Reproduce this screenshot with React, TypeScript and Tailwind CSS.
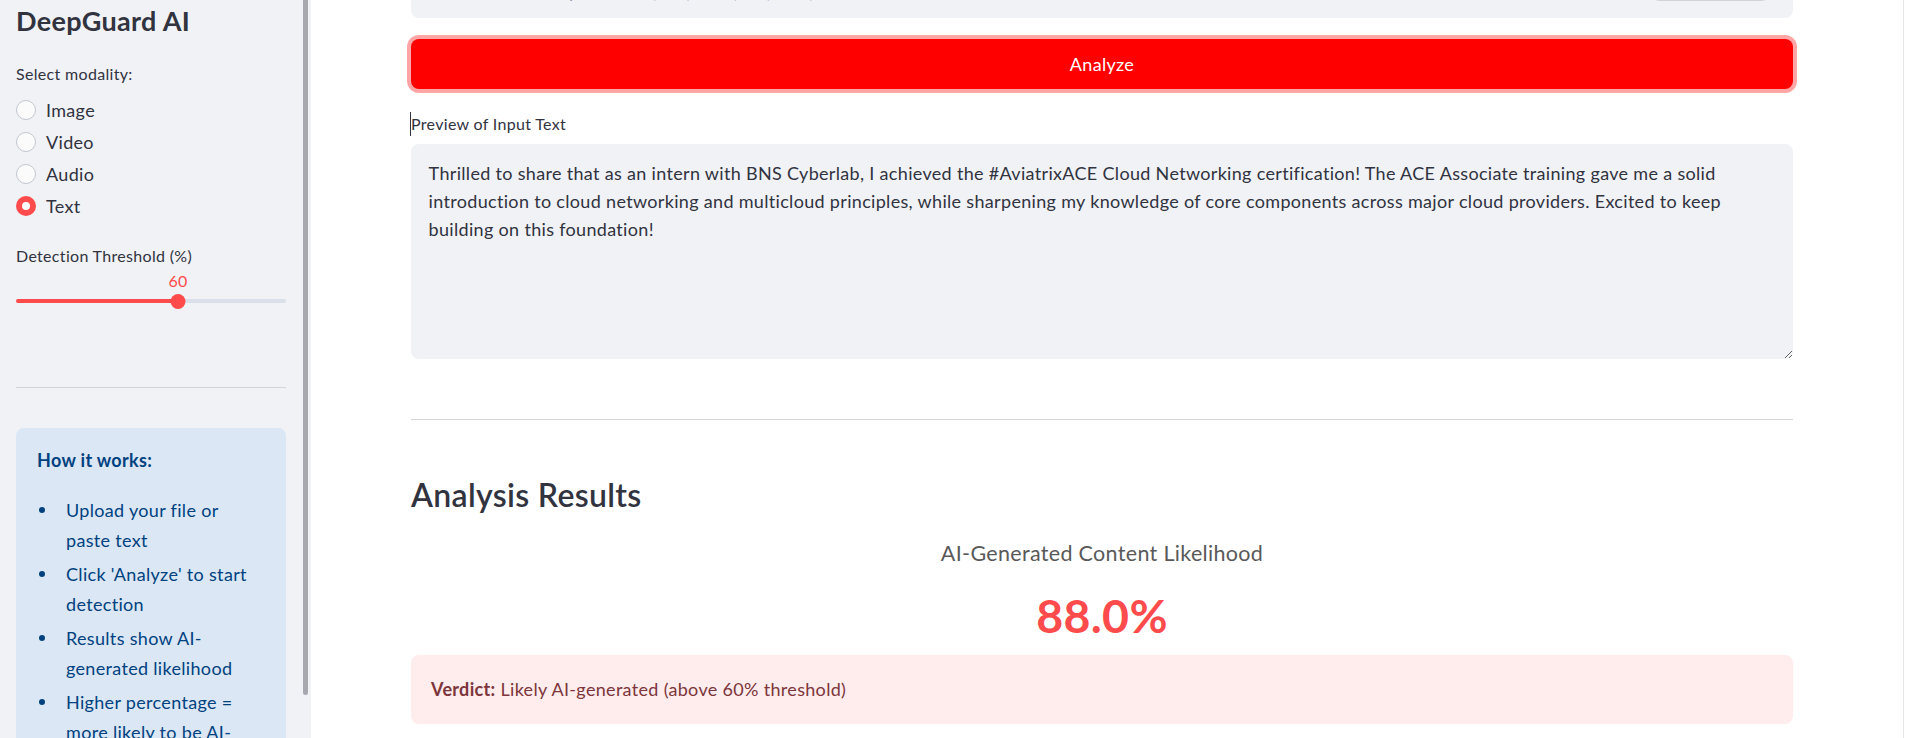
import React from 'react';

const INPUT_TEXT =
  "Thrilled to share that as an intern with BNS Cyberlab, I achieved the #AviatrixACE Cloud Networking certification! The ACE Associate training gave me a solid introduction to cloud networking and multicloud principles, while sharpening my knowledge of core components across major cloud providers. Excited to keep building on this foundation!";

const MODALITIES = ['Image', 'Video', 'Audio', 'Text'];

const STEPS = [
  'Upload your file or paste text',
  "Click 'Analyze' to start detection",
  'Results show AI-generated likelihood',
  'Higher percentage = more likely to be AI-generated',
];

function Radio({ label, checked }: { label: string; checked?: boolean }) {
  return (
    <label className="flex h-[32px] items-center gap-[10px]">
      {checked ? (
        <span className="flex h-[20px] w-[20px] items-center justify-center rounded-full bg-[#ff4b4b]">
          <span className="h-[8px] w-[8px] rounded-full bg-white" />
        </span>
      ) : (
        <span className="h-[20px] w-[20px] rounded-full border border-[#c3c6cf] bg-[#fbfbfc]" />
      )}
      <span className="text-[18px] leading-[28px]">{label}</span>
    </label>
  );
}

function Sidebar() {
  const threshold = 60;
  return (
    <aside className="relative h-full w-[311px] shrink-0 bg-[#f0f2f6]">
      <div className="pl-[16px] pr-[25px] pt-[3px]">
        <h2 className="text-[27px] font-bold leading-[36px] text-[#31333f]">DeepGuard AI</h2>

        <p className="mt-[23px] text-[16px] leading-[24px]">Select modality:</p>
        <div className="mt-[8px] flex flex-col">
          {MODALITIES.map((m) => (
            <Radio key={m} label={m} checked={m === 'Text'} />
          ))}
        </div>

        <p className="mt-[22px] text-[16px] leading-[24px]">Detection Threshold (%)</p>
        <div className="relative h-[50px]">
          <span
            className="absolute top-[3px] -translate-x-1/2 text-[16px] leading-[20px] text-[#ff4b4b]"
            style={{ left: `${threshold * 2.7}px` }}
          >
            {threshold}
          </span>
          <div className="absolute left-0 right-0 top-[31px] h-[4px] rounded-full bg-[#dadfe9]">
            <div className="h-full rounded-full bg-[#ff4b4b]" style={{ width: `${threshold}%` }} />
          </div>
          <span
            className="absolute top-[26px] h-[15px] w-[15px] -translate-x-1/2 rounded-full bg-[#ff4b4b]"
            style={{ left: `${threshold * 2.7}px` }}
          />
        </div>

        <div className="mt-[69px] h-px bg-[#d3d4d8]" />

        <div className="mt-[40px] rounded-lg bg-[#dbe7f4] pb-[20px] pl-[21px] pr-[28px] pt-[18px] text-[#004280]">
          <p className="text-[18px] font-bold leading-[28px]">How it works:</p>
          <ul className="mt-[21px] flex flex-col gap-[4px]">
            {STEPS.map((s) => (
              <li key={s} className="flex text-[18px] leading-[30px]">
                <span className="flex h-[30px] w-[29px] shrink-0 items-center pl-[2px]">
                  <span className="h-[6px] w-[6px] rounded-full bg-[#004280]" />
                </span>
                <span>{s}</span>
              </li>
            ))}
          </ul>
        </div>
      </div>

      {/* sidebar scrollbar */}
      <div className="absolute right-[3px] top-0 h-[695px] w-[5px] rounded-b-full bg-[#a8a8b0]" />
    </aside>
  );
}

function UploadIcon() {
  return (
    <svg width="40" height="40" viewBox="0 0 24 24" fill="none" stroke="#a3a8b8" strokeWidth="1.5">
      <path d="M7 18a4.6 4.4 0 0 1 0-9h0A5 4.5 0 0 1 17 9h1a3.5 3.5 0 0 1 0 7h-1" />
      <path d="M9 15l3-3 3 3M12 12v9" />
    </svg>
  );
}

export default function App() {
  return (
    <div className="flex h-[738px] w-full overflow-hidden bg-white font-['Lato','Noto_Sans',sans-serif] tracking-[0.02em] text-[#31333f]">
      <Sidebar />

      <main className="relative h-full flex-1 overflow-hidden">
        <div className="ml-[100px] w-[1382px]">
          {/* file uploader, scrolled mostly out of view */}
          <div className="mt-[-72px] flex h-[90px] items-end justify-between rounded-lg bg-[#f0f2f6] px-[17px] pb-[17px]">
            <div className="mb-[-1px] flex items-end gap-[16px]">
              <UploadIcon />
              <div className="flex flex-col">
                <span className="text-[16px] leading-[22px]">Drag and drop file here</span>
                <span className="text-[13.6px] leading-[16px] text-[#808495]">
                  Limit 200MB per file • TXT, PDF, DOCX, CSV, JSON, MD
                </span>
              </div>
            </div>
            <button className="mr-[6px] h-[40px] rounded-lg border border-[#d2d3d7] bg-white px-[14px] text-[16px]">
              Browse files
            </button>
          </div>

          <button className="mt-[21px] flex h-[50px] w-full items-center justify-center rounded-lg bg-[#ff0000] text-[18px] text-white ring-4 ring-[#ffa5a5]">
            Analyze
          </button>

          <div className="mt-[23px] flex items-center">
            <span className="-ml-px h-[24px] w-px bg-[#31333f]" />
            <span className="text-[16px] leading-[24px]">Preview of Input Text</span>
          </div>

          <textarea
            readOnly
            defaultValue={INPUT_TEXT}
            className="mt-[8px] block h-[215px] w-full resize-y rounded-lg bg-[#f0f2f6] px-[17.6px] pb-[17.6px] pt-[14.6px] text-[18px] leading-[28.16px] text-[#31333f] outline-none"
          />

          <hr className="mt-[60px] h-px border-0 bg-[#d6d6d9]" />

          <h2 className="mt-[53px] text-[32px] font-semibold leading-[43px] text-[#31333f]">Analysis Results</h2>

          <p className="mt-[23px] text-center text-[21.5px] leading-[29px] text-[#595959]">
            AI-Generated Content Likelihood
          </p>
          <p className="mt-[18px] text-center text-[46.5px] font-bold leading-[58px] text-[#ff4b4b]">88.0%</p>

          <div className="mt-[11px] flex h-[69px] items-center rounded-lg bg-[#ffecec] px-[20px] text-[18px] text-[#7d353b]">
            <span>
              <b className="font-bold">Verdict:</b> Likely AI-generated (above 60% threshold)
            </span>
          </div>
        </div>

        {/* page scrollbar track */}
        <div className="absolute right-[2px] top-0 h-full w-px bg-[#e6e6e6]" />
      </main>
    </div>
  );
}
